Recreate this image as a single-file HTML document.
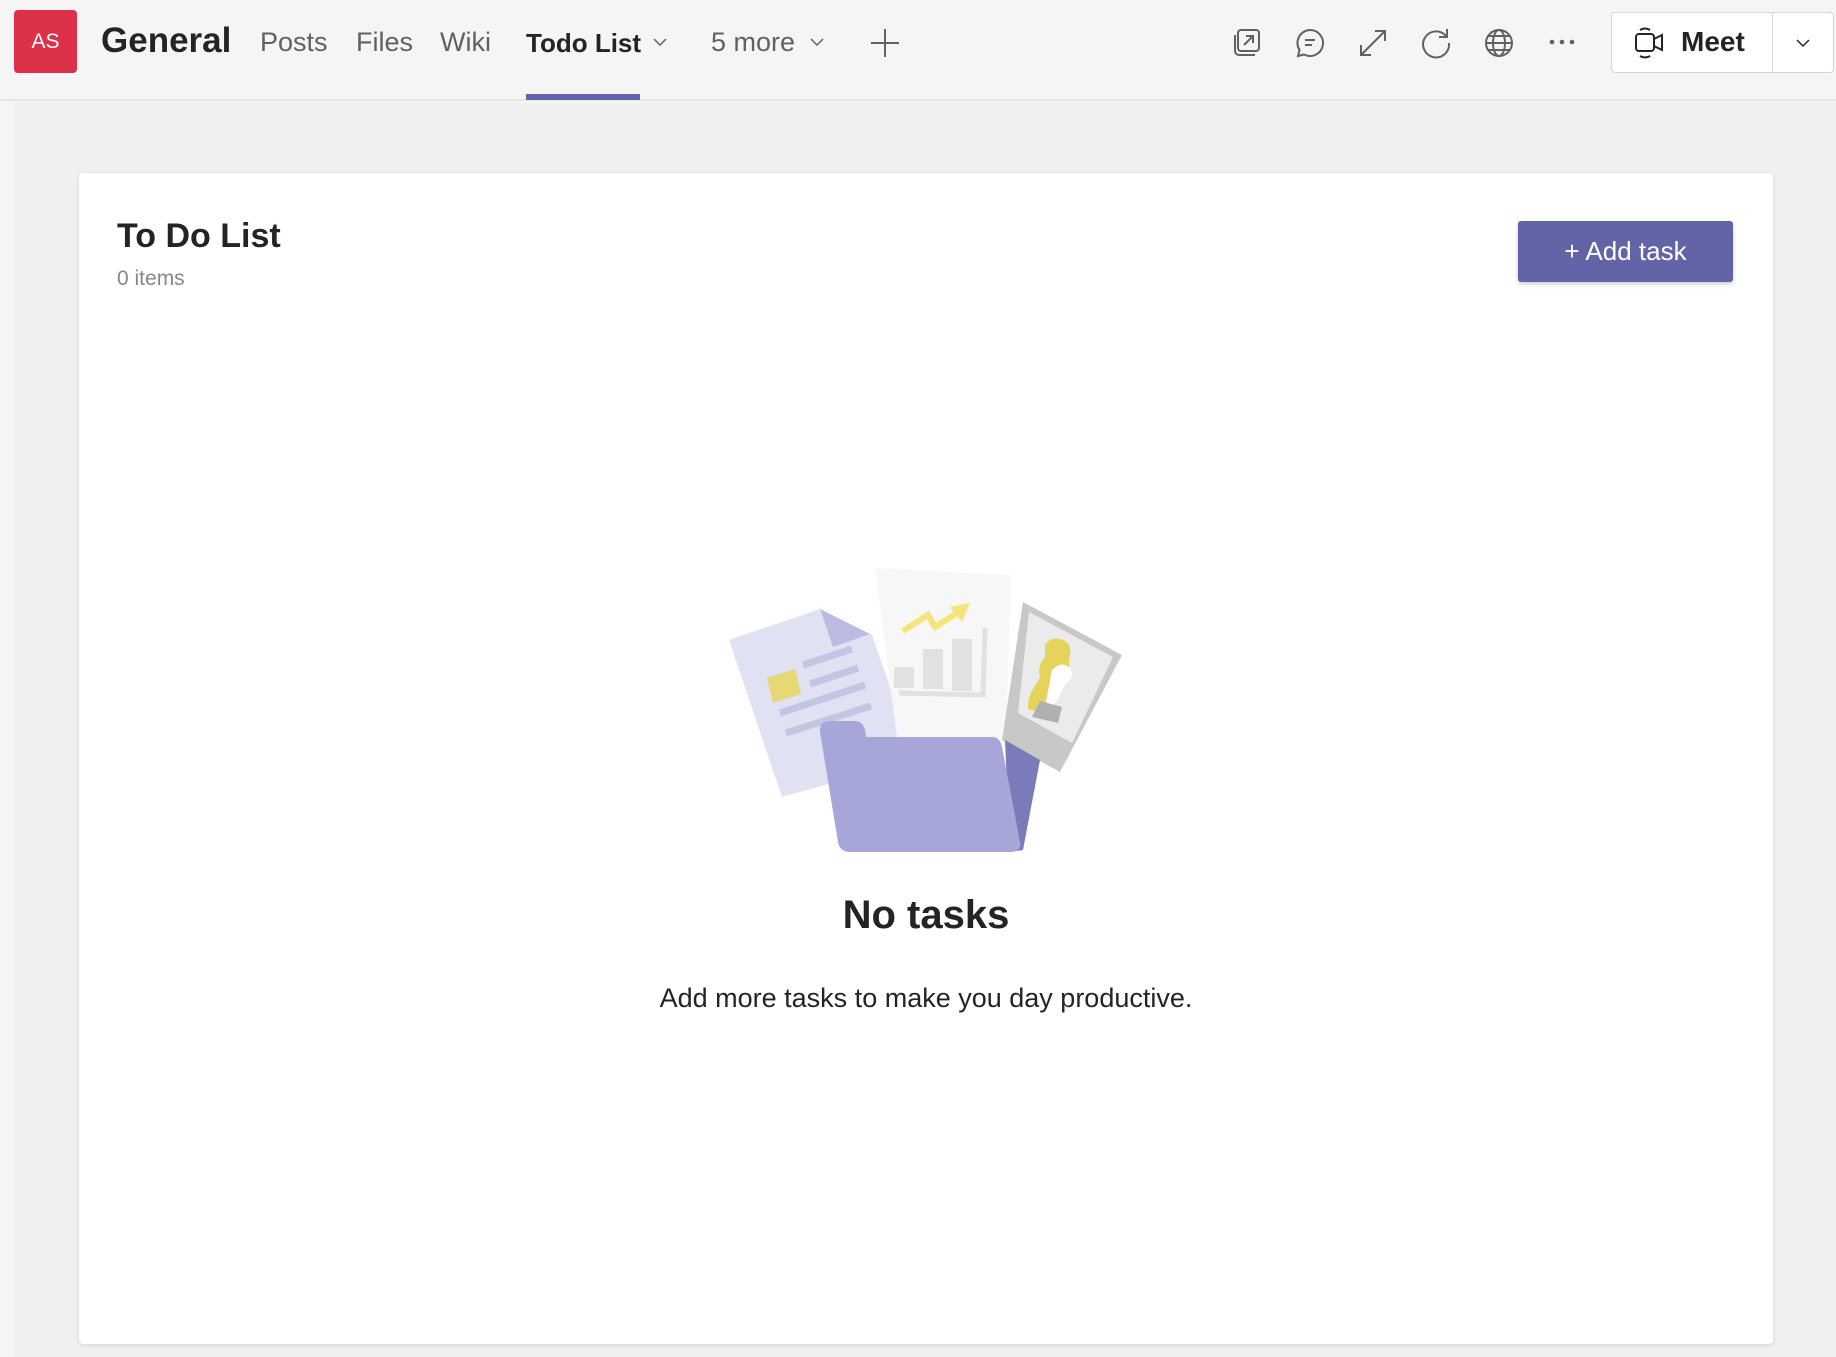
<!DOCTYPE html>
<html><head><meta charset="utf-8"><style>
*{margin:0;padding:0;box-sizing:border-box}
body{width:1836px;height:1357px;background:#f5f5f5;font-family:"Liberation Sans",sans-serif;position:relative;overflow:hidden;color:#252423}
.a{position:absolute;white-space:nowrap}
.top{position:absolute;left:0;top:0;width:1836px;height:101px;background:#f5f5f5;border-bottom:2px solid #e6e6e6}
.tab{position:absolute;top:27px;font-size:27px;color:#616161}
.content{position:absolute;left:14px;top:103px;width:1822px;height:1254px;background:#f0f0f0}
.card{position:absolute;left:79px;top:173px;width:1694px;height:1171px;background:#fff;border-radius:4px;box-shadow:0 1px 4px rgba(0,0,0,.12)}
.ic{position:absolute;top:27px}
</style></head><body>
<div class="top">
 <div class="a" style="left:14px;top:10px;width:63px;height:63px;background:#dc3149;border-radius:4px;color:#fff;font-size:21px;text-align:center;line-height:63px">AS</div>
 <div class="a" style="left:101px;top:21px;font-size:35px;font-weight:bold;color:#252423">General</div>
 <div class="tab" style="left:260px">Posts</div>
 <div class="tab" style="left:356px">Files</div>
 <div class="tab" style="left:440px">Wiki</div>
 <div class="tab" style="left:526px;top:28px;font-size:26px;color:#252423;font-weight:bold">Todo List</div>
 <svg class="ic" style="left:652px;top:36px" width="16" height="12"><path d="M2 3l6 6 6-6" fill="none" stroke="#616161" stroke-width="1.5"/></svg>
 <div class="tab" style="left:711px">5 more</div>
 <svg class="ic" style="left:809px;top:36px" width="16" height="12"><path d="M2 3l6 6 6-6" fill="none" stroke="#616161" stroke-width="1.5"/></svg>
 <svg class="ic" style="left:870px;top:28px" width="30" height="30"><path d="M15 1v28M1 15h28" stroke="#616161" stroke-width="2"/></svg>
 <div class="a" style="left:526px;top:94px;width:114px;height:6px;background:#6264a7"></div>
 <svg class="ic" style="left:1231px" width="32" height="32" fill="none" stroke="#616161" stroke-width="2"><rect x="7" y="3" width="21" height="21" rx="3"/><path d="M4 8v16a4 4 0 0 0 4 4h16"/><path d="M13 18l9-9M15 9h7v7"/></svg>
 <svg class="ic" style="left:1294px" width="32" height="32" fill="none" stroke="#616161" stroke-width="2"><path d="M16 3a13 13 0 1 1-6 24.5L4 29l1.5-6A13 13 0 0 1 16 3z"/><path d="M11 13h10M11 18h7"/></svg>
 <svg class="ic" style="left:1357px" width="32" height="32" fill="none" stroke="#616161" stroke-width="2"><path d="M4 28L28 4M18 4h10v10M4 18v10h10"/></svg>
 <svg class="ic" style="left:1420px" width="32" height="32" fill="none" stroke="#616161" stroke-width="2"><path d="M26 9A13 13 0 1 0 29 16"/><path d="M27 2v8h-8"/></svg>
 <svg class="ic" style="left:1483px" width="32" height="32" fill="none" stroke="#616161" stroke-width="2"><circle cx="16" cy="16" r="13"/><ellipse cx="16" cy="16" rx="6" ry="13"/><path d="M3 16h26M5 9h22M5 23h22"/></svg>
 <svg class="ic" style="left:1548px;top:38px" width="28" height="8" fill="#616161"><circle cx="4" cy="4" r="2.3"/><circle cx="14" cy="4" r="2.3"/><circle cx="24" cy="4" r="2.3"/></svg>
 <div class="a" style="left:1611px;top:12px;width:223px;height:61px;background:#fff;border:1px solid #d6d6d6;border-radius:4px"></div>
 <div class="a" style="left:1772px;top:12px;width:1px;height:61px;background:#d6d6d6"></div>
 <svg class="ic" style="left:1634px;top:26px" width="32" height="34" fill="none" stroke="#252423" stroke-width="2"><rect x="2" y="8" width="18" height="17" rx="3"/><path d="M20 13l8-4v15l-8-4"/><path d="M6 4q5-3 10 0M6 30q5 3 10 0"/></svg>
 <div class="a" style="left:1681px;top:26px;font-size:28px;font-weight:bold;color:#252423">Meet</div>
 <svg class="ic" style="left:1795px;top:37px" width="16" height="12"><path d="M2 3l6 6 6-6" fill="none" stroke="#252423" stroke-width="1.5"/></svg>
</div>
<div class="content"></div>
<div class="card">
 <div class="a" style="left:38px;top:44px;font-size:34px;font-weight:bold;color:#252423">To Do List</div>
 <div class="a" style="left:38px;top:94px;font-size:21px;color:#8a8886">0 items</div>
 <div class="a" style="left:1439px;top:48px;width:215px;height:61px;background:#6264a7;border-radius:3px;box-shadow:0 2px 4px rgba(0,0,0,.2);color:#fff;font-size:26px;text-align:center;line-height:61px">+ Add task</div>
 <div class="a" style="left:0;top:720px;width:1694px;text-align:center;font-size:40px;font-weight:bold;color:#252423">No tasks</div>
 <div class="a" style="left:0;top:810px;width:1694px;text-align:center;font-size:27px;color:#252423">Add more tasks to make you day productive.</div>
</div>
<svg class="a" style="left:700px;top:550px" width="450" height="320" viewBox="0 0 450 320">
 <polygon points="29,90 120,59 172,85 215,210 125,235 82,247" fill="#e1e1f4"/>
 <polygon points="120,59 170,84 133,97" fill="#bcbce3"/>
 <g stroke="#c5c5e3" stroke-width="7"><path d="M103 115L152 99M110 134L158 118M80 163L165 135M86 183L171 156"/></g>
 <polygon points="67,128 95,119 101,144 73,153" fill="#e6d874"/>
 <polygon points="175,18 311,25 306,195 198,195" fill="#f7f7f7"/>
 <path d="M199 143L283 145L285 78" fill="none" stroke="#e1e1e1" stroke-width="5"/>
 <rect x="194" y="117" width="20" height="21" fill="#e1e1e1"/>
 <rect x="223" y="99" width="20" height="40" fill="#e1e1e1"/>
 <rect x="252" y="89" width="20" height="52" fill="#e1e1e1"/>
 <path d="M203 81L228 65L235 77L262 60" fill="none" stroke="#f5e47a" stroke-width="6"/>
 <polygon points="270,53 250,57 262,72" fill="#f5e47a"/>
 <polygon points="323,52 422,105 360,222 302,190" fill="#c8c8c8"/>
 <polygon points="329,62 413,107 372,193 318,163" fill="#ebebeb"/>
 <path d="M345 95q5-8 15-6 12 3 10 16-2 8 0 15 3 8-5 15-6 6-10 10-8 8-5 20l-22-6q0-12 4-18 5-8 8-14-3-12 5-20z" fill="#e6d35c"/>
 <path d="M352 120q10-10 18-2 5 8-3 15-6 8-8 14-2 8-14 10z" fill="#fff"/>
 <path d="M332 167l8-16 22 6-4 16z" fill="#b0b0b0"/>
 <polygon points="305,190 340,210 323,300 310,302" fill="#7c7bba"/>
 <path d="M130 171h25q10 0 11 16h126q8 0 10 10l18 95q2 10-10 10H150q-10 0-12-10L120 182q-1-11 10-11z" fill="#a6a6d8"/>
</svg>
</body></html>
